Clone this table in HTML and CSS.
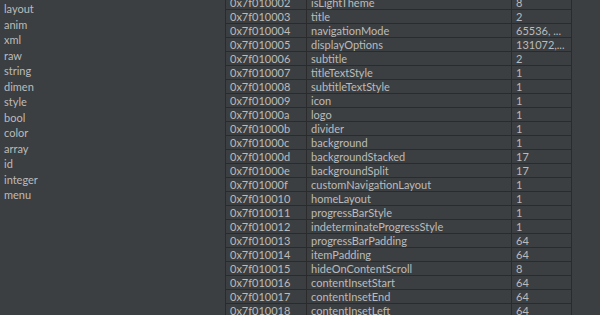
FILE: index.html
```html
<!DOCTYPE html>
<html>
<head>
<meta charset="utf-8">
<link rel="stylesheet" href="styles.css">
</head>
<body>
<div class="app">
  <ul class="types">
    <li>layout</li><li>anim</li><li>xml</li><li>raw</li><li>string</li><li>dimen</li><li>style</li><li>bool</li><li>color</li><li>array</li><li>id</li><li>integer</li><li>menu</li>
  </ul>
  <div class="table-wrap">
    <table class="res">
      <tr><td>0x7f010002</td><td>isLightTheme</td><td>8</td></tr>
      <tr><td>0x7f010003</td><td>title</td><td>2</td></tr>
      <tr><td>0x7f010004</td><td>navigationMode</td><td>65536, ...</td></tr>
      <tr><td>0x7f010005</td><td>displayOptions</td><td>131072,...</td></tr>
      <tr><td>0x7f010006</td><td>subtitle</td><td>2</td></tr>
      <tr><td>0x7f010007</td><td>titleTextStyle</td><td>1</td></tr>
      <tr><td>0x7f010008</td><td>subtitleTextStyle</td><td>1</td></tr>
      <tr><td>0x7f010009</td><td>icon</td><td>1</td></tr>
      <tr><td>0x7f01000a</td><td>logo</td><td>1</td></tr>
      <tr><td>0x7f01000b</td><td>divider</td><td>1</td></tr>
      <tr><td>0x7f01000c</td><td>background</td><td>1</td></tr>
      <tr><td>0x7f01000d</td><td>backgroundStacked</td><td>17</td></tr>
      <tr><td>0x7f01000e</td><td>backgroundSplit</td><td>17</td></tr>
      <tr><td>0x7f01000f</td><td>customNavigationLayout</td><td>1</td></tr>
      <tr><td>0x7f010010</td><td>homeLayout</td><td>1</td></tr>
      <tr><td>0x7f010011</td><td>progressBarStyle</td><td>1</td></tr>
      <tr><td>0x7f010012</td><td>indeterminateProgressStyle</td><td>1</td></tr>
      <tr><td>0x7f010013</td><td>progressBarPadding</td><td>64</td></tr>
      <tr><td>0x7f010014</td><td>itemPadding</td><td>64</td></tr>
      <tr><td>0x7f010015</td><td>hideOnContentScroll</td><td>8</td></tr>
      <tr><td>0x7f010016</td><td>contentInsetStart</td><td>64</td></tr>
      <tr><td>0x7f010017</td><td>contentInsetEnd</td><td>64</td></tr>
      <tr><td>0x7f010018</td><td>contentInsetLeft</td><td>64</td></tr>
    </table>
  </div>
</div>
</body>
</html>
```

FILE: styles.css
```css
html, body {
  margin: 0;
  padding: 0;
  background: #3c3f41;
  overflow: hidden;
}
.app {
  display: flex;
  width: 600px;
  height: 315px;
  overflow: hidden;
  font-family: "Lato", "Liberation Sans", sans-serif;
  font-size: 11px;
  color: #bbbbbb;
}
.types {
  list-style: none;
  margin: 0;
  padding: 1px 0 0 4px;
  width: 221px;
  flex: none;
  line-height: 15.5px;
}
.table-wrap {
  flex: none;
  margin-top: -4px;
}
.res {
  border-collapse: collapse;
  table-layout: fixed;
  width: 347px;
  border-left: 1px solid #2b2b2b;
  border-right: 1px solid #2b2b2b;
}
.res td {
  height: 13px;
  line-height: 13px;
  padding: 0 0 0 4px;
  border-bottom: 1px solid #2b2b2b;
  white-space: nowrap;
  overflow: hidden;
  box-sizing: content-box;
}
.res td + td {
  border-left: 1px solid #2b2b2b;
}
.res td:nth-child(1) { width: 76px; }
.res td:nth-child(2) { width: 200px; }
.res td:nth-child(3) { width: 55px; }
```
